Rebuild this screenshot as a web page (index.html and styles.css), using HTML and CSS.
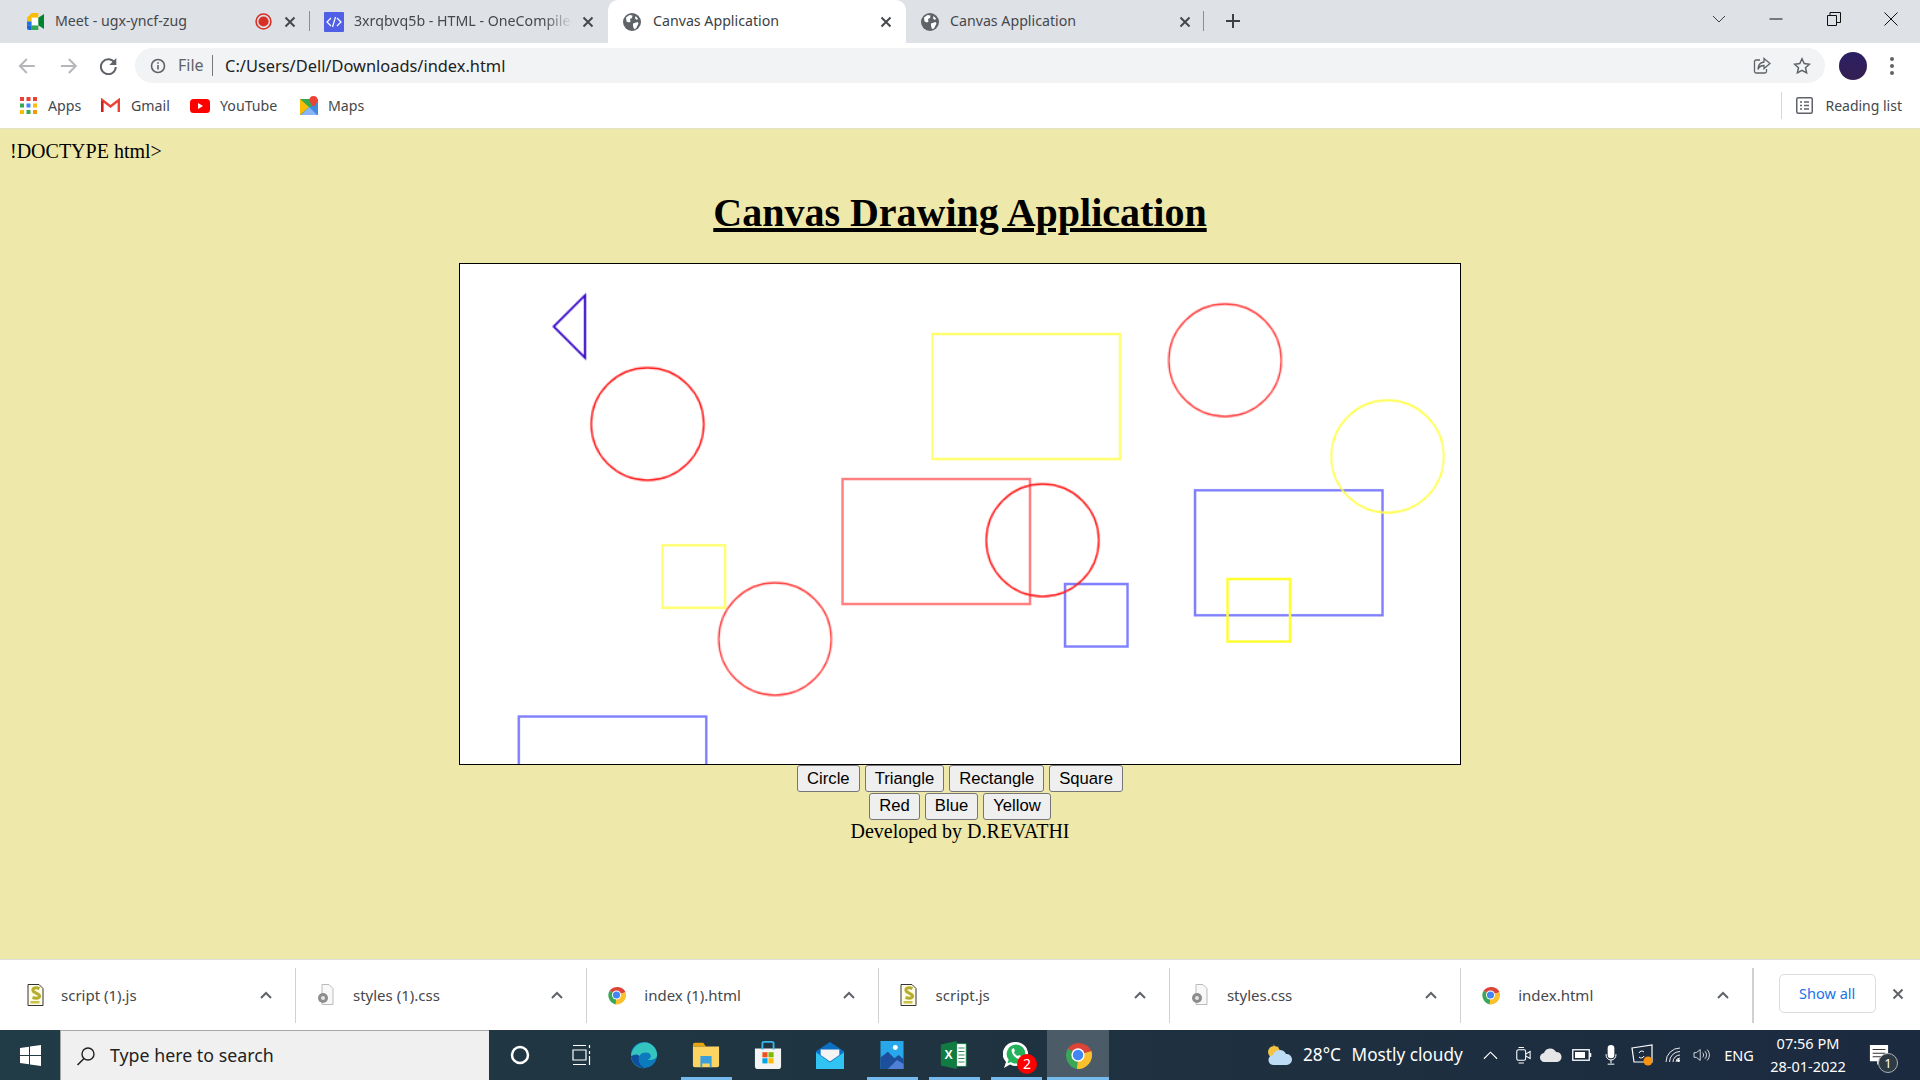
FILE: index.html
```html
<!DOCTYPE html>
<html lang="en">
<head>
<meta charset="utf-8">
<title>Canvas Application</title>
<link rel="stylesheet" href="styles.css">
</head>
<body>
<svg class="defs" width="0" height="0" aria-hidden="true">
  <symbol id="x" viewBox="0 0 12 12"><path d="M1.5 1.5l9 9M10.5 1.5l-9 9" fill="none" stroke="currentColor" stroke-width="2"/></symbol>
  <symbol id="globe" viewBox="0 0 18 18"><circle cx="9" cy="9" r="9" fill="#5f6368"/><path d="M3 4.500l3.500-2.500 3 .5-.5 2.500-2 1 .5 2.500-1.500 1L3.500 8.500zM10 10.500l4.500-1.500 1 1.500-2.500 5-2 .5-1-3zM12.500 3l2.500 2.500-1 1.500-2-1.500z" fill="#fff"/></symbol>
  <symbol id="caret" viewBox="0 0 12 8"><path d="M1 7l5-5 5 5" fill="none" stroke="currentColor" stroke-width="2"/></symbol>
  <symbol id="chrome" viewBox="0 0 24 24"><path d="M12 12L3.200 6.500A12 12 0 0 1 23.500 8.500z" fill="#db4437"/><path d="M12 12l11.500-3.500A12 12 0 0 1 11 24z" fill="#fbc02d"/><path d="M12 12l-1 12A12 12 0 0 1 3.200 6.500z" fill="#3aa757"/><circle cx="12" cy="12" r="5.700" fill="#fff"/><circle cx="12" cy="12" r="4.500" fill="#4285f4"/></symbol>
  <symbol id="jsfile" viewBox="0 0 18 22"><path d="M1.500.5h11l4 4v17h-15z" fill="#fffde8" stroke="#333"/><path d="M13 4.500c-5-2-8 .5-6 3l5 3c3 2 0 5-6 3" fill="none" stroke="#b5ad2c" stroke-width="3"/><path d="M4 17h9v2.500H4z" fill="#c9c24a"/></symbol>
  <symbol id="cssfile" viewBox="0 0 18 22"><path d="M5.500.5h7l4 4v16h-11z" fill="#f8f8f8" stroke="#bbb"/><circle cx="6.500" cy="14" r="5" fill="#8d8d8d"/><circle cx="6.500" cy="14" r="2" fill="#e4e4e4"/></symbol>
</svg>

<div class="screen">
  <header class="tabstrip">
    <div class="tab first">
      <svg class="ico19" viewBox="0 0 20 18"><path d="M1 5l5-5h7v5H6v4H1z" fill="#fbbc04"/><path d="M1 9h5v4H1z" fill="#1a73e8"/><path d="M1 13h5v5H3a2 2 0 0 1-2-2z" fill="#1967d2"/><path d="M6 13h7v5H6z" fill="#34a853"/><path d="M6 5h7v8H6z" fill="#fff"/><path d="M13 5v8l6 4V1z" fill="#00832d"/></svg>
      <span class="title">Meet - ugx-yncf-zug</span>
      <svg class="rec" viewBox="0 0 16 16"><circle cx="8" cy="8" r="7" fill="none" stroke="#d93025" stroke-width="1.500"/><circle cx="8" cy="8" r="4.800" fill="#d93025"/></svg>
      <svg class="close"><use href="#x"/></svg>
    </div>
    <div class="tab second">
      <svg class="ico20" viewBox="0 0 20 20"><rect width="20" height="20" rx="1" fill="#4f5fe6"/><path d="M7 6l-4 4 4 4M13 6l4 4-4 4M11.500 5l-3 10" fill="none" stroke="#fff" stroke-width="1.200"/></svg>
      <span class="title fade">3xrqbvq5b - HTML - OneCompiler</span>
      <svg class="close"><use href="#x"/></svg>
    </div>
    <div class="tab active">
      <svg class="ico18"><use href="#globe"/></svg>
      <span class="title">Canvas Application</span>
      <svg class="close"><use href="#x"/></svg>
    </div>
    <div class="tab last">
      <svg class="ico18"><use href="#globe"/></svg>
      <span class="title">Canvas Application</span>
      <svg class="close"><use href="#x"/></svg>
    </div>
    <svg class="newtab" viewBox="0 0 16 16"><path d="M8 1v14M1 8h14" stroke="#3c4043" stroke-width="2"/></svg>
    <div class="winctl">
      <svg class="ctl" viewBox="0 0 16 16"><path d="M2 5l6 6 6-6" fill="none" stroke="#3c4043"/></svg>
      <svg class="ctl" viewBox="0 0 16 16"><path d="M1.500 8h13" stroke="#111"/></svg>
      <svg class="ctl" viewBox="0 0 16 16"><path d="M1.500 4.500h9v10h-9zM4 4.500v-3h10.500v10h-4" fill="none" stroke="#111"/></svg>
      <svg class="ctl" viewBox="0 0 16 16"><path d="M1.500 1.500l13 13M14.500 1.500l-13 13" stroke="#111"/></svg>
    </div>
  </header>

  <nav class="toolbar">
    <svg class="navbtn" viewBox="0 0 41 18"><path d="M28 9H13M20 2l-7 7 7 7" fill="none" stroke="#b4b6b9" stroke-width="2"/></svg>
    <svg class="navbtn" viewBox="0 0 41 18"><path d="M13 9h15M21 2l7 7-7 7" fill="none" stroke="#b4b6b9" stroke-width="2"/></svg>
    <svg class="navbtn" viewBox="0 0 41 18"><path d="M27 6a7.500 7.500 0 1 0 1 4" fill="none" stroke="#5f6368" stroke-width="2"/><path d="M28.500 1v7h-7z" fill="#5f6368"/></svg>
    <div class="omnibox">
      <svg class="ico16" viewBox="0 0 16 16"><circle cx="8" cy="8" r="6.500" fill="none" stroke="#5f6368" stroke-width="1.600"/><path d="M8 7v4.500M8 4.300v1.500" stroke="#5f6368" stroke-width="1.600"/></svg>
      <span class="scheme">File</span>
      <span class="url">C:/Users/Dell/Downloads/index.html</span>
      <svg class="omni-ico" viewBox="0 0 18 18"><path d="M7 3H3a1.500 1.500 0 0 0-1.500 1.500v10A1.500 1.500 0 0 0 3 16h9a1.500 1.500 0 0 0 1.500-1.500V12" fill="none" stroke="#5f6368" stroke-width="1.300"/><path d="M11 1.500l6 5-6 5V8.500c-3 0-5 1-6 4 0-4 2-7 6-7.500z" fill="none" stroke="#5f6368" stroke-width="1.300"/></svg>
      <svg class="omni-ico" viewBox="0 0 18 18"><path d="M9 1.800l2.200 4.800 5.200.6-3.900 3.500 1.100 5.200L9 13.300l-4.600 2.600 1.100-5.200L1.600 7.200l5.200-.6z" fill="none" stroke="#5f6368" stroke-width="1.500"/></svg>
    </div>
    <div class="avatar"></div>
    <svg class="menu" viewBox="0 0 16 20"><circle cx="8" cy="3" r="2" fill="#5f6368"/><circle cx="8" cy="10" r="2" fill="#5f6368"/><circle cx="8" cy="17" r="2" fill="#5f6368"/></svg>
  </nav>

  <div class="bookmarks">
    <span class="bm bm-apps"><svg class="bm-i17" viewBox="0 0 17 17"><rect width="4" height="4" fill="#ea4335"/><rect x="6.500" width="4" height="4" fill="#ea4335"/><rect x="13" width="4" height="4" fill="#ea4335"/><rect y="6.500" width="4" height="4" fill="#34a853"/><rect x="6.500" y="6.500" width="4" height="4" fill="#4285f4"/><rect x="13" y="6.500" width="4" height="4" fill="#fbbc04"/><rect y="13" width="4" height="4" fill="#fbbc04"/><rect x="6.500" y="13" width="4" height="4" fill="#34a853"/><rect x="13" y="13" width="4" height="4" fill="#f29900"/></svg>Apps</span>
    <span class="bm bm-gmail"><svg class="bm-i19" viewBox="0 0 19 15"><path d="M1.200 14V2l8.300 6.500L17.800 2v12" fill="none" stroke="#ea4335" stroke-width="2.400"/><path d="M1.200 14V3" stroke="#c5221f" stroke-width="2.400"/></svg>Gmail</span>
    <span class="bm bm-yt"><svg class="bm-i20" viewBox="0 0 20 14"><rect width="20" height="14" rx="3.500" fill="#f00"/><path d="M8 4l5 3-5 3z" fill="#fff"/></svg>YouTube</span>
    <span class="bm"><svg class="bm-i18" viewBox="0 0 18 19"><path d="M0 3h18v16H0z" fill="#34a853"/><path d="M0 19L18 5v14z" fill="#4285f4" opacity=".85"/><path d="M0 3l9 8-9 8z" fill="#fbbc04"/><path d="M9 11l-8 8h16z" fill="#8ab4f8"/><path d="M13.500 0a4 4 0 0 1 4 4c0 3-4 7-4 7s-4-4-4-7a4 4 0 0 1 4-4z" fill="#ea4335"/></svg>Maps</span>
    <span class="reading"><svg class="bm-i17" viewBox="0 0 17 17"><rect x=".75" y=".75" width="15.500" height="15.500" rx="1.500" fill="none" stroke="#5f6368" stroke-width="1.500"/><path d="M4 5h2M4 8.500h2M4 12h2M8 5h5M8 8.500h5M8 12h5" stroke="#5f6368" stroke-width="1.500"/></svg>Reading list</span>
  </div>

  <main class="page">
    <div class="doctype">!DOCTYPE html&gt;</div>
    <h1 class="heading">Canvas Drawing Application</h1>
    <canvas id="board" class="board" width="800" height="400"></canvas>
    <div class="btnrow">
      <button class="tool">Circle</button>
      <button class="tool">Triangle</button>
      <button class="tool">Rectangle</button>
      <button class="tool">Square</button>
    </div>
    <div class="btnrow">
      <button class="tool">Red</button>
      <button class="tool">Blue</button>
      <button class="tool">Yellow</button>
    </div>
    <div class="credit">Developed by D.REVATHI</div>
  </main>

  <div class="downloads">
    <div class="dl dl-first"><svg class="dl-ico"><use href="#jsfile"/></svg><span class="dl-name">script (1).js</span><svg class="dl-caret"><use href="#caret"/></svg></div>
    <div class="dl"><svg class="dl-ico"><use href="#cssfile"/></svg><span class="dl-name">styles (1).css</span><svg class="dl-caret"><use href="#caret"/></svg></div>
    <div class="dl"><svg class="dl-ico"><use href="#chrome"/></svg><span class="dl-name">index (1).html</span><svg class="dl-caret"><use href="#caret"/></svg></div>
    <div class="dl"><svg class="dl-ico"><use href="#jsfile"/></svg><span class="dl-name">script.js</span><svg class="dl-caret"><use href="#caret"/></svg></div>
    <div class="dl"><svg class="dl-ico"><use href="#cssfile"/></svg><span class="dl-name">styles.css</span><svg class="dl-caret"><use href="#caret"/></svg></div>
    <div class="dl dl-last"><svg class="dl-ico"><use href="#chrome"/></svg><span class="dl-name">index.html</span><svg class="dl-caret"><use href="#caret"/></svg></div>
    <button class="showall">Show all</button>
    <svg class="dl-close"><use href="#x"/></svg>
  </div>

  <footer class="taskbar">
    <div class="start"><svg class="win" viewBox="0 0 21 21"><path d="M0 3l9-1.300V10H0zM10 1.500L21 0v10H10zM0 11h9v8.300L0 18zM10 11h11v10l-11-1.500z" fill="#fff"/></svg></div>
    <div class="search">
      <svg class="mag" viewBox="0 0 20 20"><circle cx="12" cy="8" r="6" fill="none" stroke="#222" stroke-width="1.400"/><path d="M8 12.500L1.500 19" stroke="#222" stroke-width="1.600"/></svg>
      <span class="search-text">Type here to search</span>
    </div>
    <div class="task"><svg class="t20" viewBox="0 0 20 20"><circle cx="10" cy="10" r="8" fill="none" stroke="#fff" stroke-width="2.500"/></svg></div>
    <div class="task"><svg class="t20 tview" viewBox="0 0 20 20"><path d="M2 .5h13M2 19.500h13M2 5h13v10H2zM18.500 0v3M18.500 6v3M18.500 11v9" fill="none" stroke="#fff" stroke-width="1.200"/></svg></div>
    <div class="task"><svg class="t30" viewBox="0 0 30 30"><circle cx="15" cy="15" r="14" fill="#0c7bbd"/><path d="M1 15C3 5 12 0 19 2c6 2 10 7 10 13 0 4-5 6-10 5 3-1 4-3 3-5-2-4-10-3-12 1-2 5 1 11 7 13C8 30 1 24 1 15z" fill="#35c5c0"/><path d="M10 16c-2 5 1 11 7 13-8 1-16-5-16-14 1 3 4-3 9 1z" fill="#0b4f9e"/></svg></div>
    <div class="task run"><svg class="t30" viewBox="0 0 30 28"><path d="M1 3a2 2 0 0 1 2-2h9l3 4H1z" fill="#e8a60c"/><path d="M1 5h28v20a2 2 0 0 1-2 2H3a2 2 0 0 1-2-2z" fill="#fcd462"/><path d="M9 15h12v12h-2v-4h-8v4H9z" fill="#3aa0dc"/></svg></div>
    <div class="task"><svg class="t30" viewBox="0 0 30 30"><path d="M1 8h28v19a3 3 0 0 1-3 3H4a3 3 0 0 1-3-3z" fill="#f4f4f4"/><path d="M9 9V3a2 2 0 0 1 2-2h8a2 2 0 0 1 2 2v6" fill="none" stroke="#38b5e8" stroke-width="2"/><rect x="9" y="12" width="5.500" height="5.500" fill="#f25022"/><rect x="15.500" y="12" width="5.500" height="5.500" fill="#7fba00"/><rect x="9" y="18.500" width="5.500" height="5.500" fill="#00a4ef"/><rect x="15.500" y="18.500" width="5.500" height="5.500" fill="#ffb900"/></svg></div>
    <div class="task"><svg class="t30" viewBox="0 0 30 30"><path d="M0 11L15 1l15 10v19H0z" fill="#0b6fc4"/><path d="M0 12l15 11 15-11v18H0z" fill="#31c4f3"/><path d="M5 9h20v6l-10 7-10-7z" fill="#f4f4f4"/></svg></div>
    <div class="task run"><svg class="t30" viewBox="0 0 30 34"><rect width="28" height="34" x="1" fill="#28a8ea"/><path d="M1 34V20l9-7 8 8 5-4 6 5v12z" fill="#1d4f9c"/><path d="M10 34l11-11 8 5v6z" fill="#4f7fd6"/><circle cx="19" cy="8" r="3" fill="#fff"/></svg></div>
    <div class="task run"><svg class="t30" viewBox="0 0 30 32"><path d="M0 4l18-4v32L0 28z" fill="#107c41"/><path d="M18 3h11v26H18z" fill="#fff" stroke="#107c41"/><path d="M20 8h7M20 12h7M20 16h7M20 20h7M20 24h7" stroke="#107c41"/><text class="xl" x="4" y="21">X</text></svg></div>
    <div class="task run"><span class="wa"><svg class="t26" viewBox="0 0 26 28"><path d="M13 1a12 12 0 0 1 0 24c-2 0-4-.5-6-1.500L1 27l2-6a12 12 0 0 1 10-20z" fill="#fff"/><path d="M13 3.500a9.500 9.500 0 0 1 0 19c-2 0-3.500-.5-5-1.500l-3.500 1.300 1.200-3.500A9.500 9.500 0 0 1 13 3.500z" fill="#25b05a"/><path d="M9 8c-1 2 0 5 2.500 7.500s5 3 7 2l.5-2-3-1.500-1 1c-2-.5-3.500-2-4-4l1-1-1.200-3z" fill="#fff"/></svg><span class="wa-badge">2</span></span></div>
    <div class="task run on"><svg class="t28"><use href="#chrome"/></svg></div>
    <div class="weather"><svg class="sun" viewBox="0 0 28 24"><path d="M8 1l1.500 3.500 3.700-1 .3 3.800z" fill="#f5c242"/><circle cx="9" cy="9" r="6" fill="#f5c242"/><path d="M9 22a5 5 0 0 1-1-10 7 7 0 0 1 13-1 5.500 5.500 0 0 1 1 11z" fill="#bcdcf5"/></svg><span class="temp">28°C</span><span class="cond">Mostly cloudy</span></div>
    <div class="slot s36"><svg class="tr14" viewBox="0 0 16 10"><path d="M1 9l7-7 7 7" fill="none" stroke="#fff" stroke-width="1.200"/></svg></div>
    <div class="slot s28"><svg class="tr18" viewBox="0 0 18 22"><rect x="2" y="5" width="10" height="12" rx="2" fill="none" stroke="#fff" stroke-width="1.200"/><path d="M12 10l5-3v8l-5-3M4 2.500h6M4 20h6" fill="none" stroke="#fff" stroke-width="1.200"/></svg></div>
    <div class="slot s28"><svg class="tr22" viewBox="0 0 22 14"><path d="M5 14a4.500 4.500 0 0 1-1-9 6.500 6.500 0 0 1 12-1 5 5 0 0 1 1 10z" fill="#e6e6e6"/></svg></div>
    <div class="slot s34"><svg class="tr20" viewBox="0 0 20 12"><rect x=".75" y=".75" width="16.500" height="10.500" fill="none" stroke="#fff" stroke-width="1.300"/><rect x="3" y="3" width="10" height="6" fill="#fff"/><path d="M18.500 4v4" stroke="#fff" stroke-width="1.500"/></svg></div>
    <div class="slot s24"><svg class="tr16" viewBox="0 0 14 24"><rect x="3" y="0" width="8" height="16" rx="4" fill="#fff"/><path d="M1 11c0 4 2 7 6 7s6-3 6-7M7 18v4M3 23h8" fill="none" stroke="#fff" stroke-width="1.200"/></svg></div>
    <div class="slot s38"><svg class="tr22b" viewBox="0 0 22 22"><path d="M1 4l20-3v17H3z" fill="none" stroke="#fff" stroke-width="1.200"/><path d="M8 9a3 3 0 0 1 5-1M13 12a3 3 0 0 1-5 1" fill="none" stroke="#fff"/><circle cx="17" cy="17" r="4.500" fill="#f7930e"/></svg></div>
    <div class="slot s24"><svg class="tr16" viewBox="0 0 16 16"><path d="M1 15A14 14 0 0 1 15 1M4.500 15A10.500 10.500 0 0 1 15 4.500M8 15a7 7 0 0 1 7-7M11 15a4 4 0 0 1 4-4" fill="none" stroke="#fff" stroke-width=".9"/><circle cx="13.500" cy="13.500" r="1.500" fill="#fff"/></svg></div>
    <div class="slot s32"><svg class="tr20" viewBox="0 0 20 18"><path d="M1 6h3l5-4v14l-5-4H1z" fill="none" stroke="#fff"/><path d="M12 6a4 4 0 0 1 0 6M15 4a7 7 0 0 1 0 10M18 2a10 10 0 0 1 0 14" fill="none" stroke="#fff"/></svg></div>
    <div class="slot s44 tray-text">ENG</div>
    <div class="clock"><span>07:56 PM</span><span>28-01-2022</span></div>
    <div class="slot s48"><span class="notif"><svg class="t20" viewBox="0 0 20 22"><path d="M0 0h20v18h-8l-4 4v-4H0z" fill="#fff"/><path d="M3 5h14M3 9h14M3 13h9" stroke="#333" stroke-width="1.200"/></svg><span class="notif-badge">1</span></span></div>
  </footer>
</div>
<script src="script.js"></script>
</body>
</html>
```
FILE: styles.css
```css
* { box-sizing: border-box; }
html, body { margin: 0; padding: 0; height: 100%; overflow: hidden; }
body { font-family: "Noto Sans", "Open Sans", sans-serif; }
.defs { position: absolute; }
svg { display: block; flex: none; }

.screen { width: 1920px; height: 1080px; display: flex; flex-direction: column; }

/* tabs */
.tabstrip { height: 43px; flex: none; background: #dee1e6; display: flex; align-items: stretch; padding-left: 12px; }
.tab { width: 298px; display: flex; align-items: center; padding-left: 14px; padding-right: 14px; font-size: 14.200px; color: #45484c; position: relative; }
.tab.first::after, .tab.last::after { content: ""; position: absolute; right: 0; top: 11px; height: 20px; width: 1px; background: #8a8d91; }
.tab .title { flex: 1; min-width: 0; white-space: nowrap; overflow: hidden; padding-left: 10px; padding-bottom: 2px; }
.tab .fade { -webkit-mask-image: linear-gradient(90deg, #000 84%, transparent 96%); mask-image: linear-gradient(90deg, #000 84%, transparent 96%); }
.tab.active { background: #fff; border-radius: 10px 10px 0 0; padding-left: 15px; color: #3c4043; }
.tab.active .title { padding-left: 12px; }
.tab.last { padding-left: 15px; padding-right: 13px; }
.tab.last .title { padding-left: 11px; }
.ico19 { width: 19px; height: 17px; }
.ico20 { width: 20px; height: 20px; }
.ico18 { width: 18px; height: 18px; }
.ico16 { width: 16px; height: 16px; }
.rec { width: 17px; height: 17px; margin-right: 12px; }
.close { width: 12px; height: 12px; color: #45494d; }
.newtab { width: 16px; height: 16px; margin: 13px 0 0 21px; }
.winctl { margin-left: auto; display: flex; padding-right: 21px; padding-top: 11px; gap: 41.500px; }
.ctl { width: 16px; height: 16px; }

/* toolbar */
.toolbar { height: 45px; flex: none; background: #fff; display: flex; align-items: center; padding-left: 7px; }
.navbtn { width: 40.700px; height: 18px; }
.omnibox { flex: 1; margin-left: 6px; height: 35px; background: #f1f3f4; border-radius: 18px; display: flex; align-items: center; padding: 0 14px 0 15px; font-size: 16.400px; color: #202124; }
.scheme { margin-left: 12px; width: 35px; color: #5f6368; border-right: 1px solid #777; line-height: 21px; height: 21px; font-size: 16px; }
.url { margin-left: 12px; flex: 1; white-space: nowrap; padding-bottom: 1px; }
.omni-ico { width: 18px; height: 18px; margin-left: 22px; }
.avatar { width: 28px; height: 28px; border-radius: 50%; margin-left: 14px; background: linear-gradient(#2b1f63, #341f52); }
.menu { width: 16px; height: 20px; margin: 0 20px 0 17px; }

/* bookmarks */
.bookmarks { height: 41px; flex: none; background: #fff; border-bottom: 1px solid #e4e2c8; display: flex; align-items: center; padding-left: 20px; padding-bottom: 5px; font-size: 14.200px; color: #45484c; }
.bm { display: flex; align-items: center; gap: 10px; white-space: nowrap; }
.bm-apps { width: 81px; gap: 11px; }
.bm-gmail { width: 89px; gap: 11px; }
.bm-yt { width: 110px; }
.bm-i17 { width: 17px; height: 17px; }
.bm-i19 { width: 19px; height: 15px; }
.bm-i20 { width: 20px; height: 14px; }
.bm-i18 { width: 18px; height: 19px; }
.reading { margin-left: auto; height: 27px; border-left: 1px solid #d5d7da; padding: 0 18px 0 14px; display: flex; align-items: center; gap: 12px; font-size: 14px; }

/* page */
.page { flex: 1; min-height: 0; overflow: hidden; background: #eee8aa; padding: 11px 10px 0; font-family: "Liberation Serif", serif; font-size: 20px; color: #000; text-align: center; }
.doctype { text-align: left; line-height: 23px; }
.heading { font-size: 40px; line-height: 46px; font-weight: 700; text-decoration: underline; margin: 27px 0 27px; }
.board { display: block; width: 1002px; height: 502px; margin: 0 auto; border: 1px solid #000; background: #fff; }
.btnrow { height: 27.500px; line-height: 27px; }
.tool { font-family: "Liberation Sans", sans-serif; font-size: 16.670px; height: 27px; padding: 0 9px; margin: 0; background: #efefef; border: 1px solid #767676; border-radius: 3px; color: #000; vertical-align: top; }
.credit { line-height: 23px; }

/* downloads */
.downloads { height: 71px; flex: none; background: #fff; border-top: 1px solid #dfdfdf; display: flex; align-items: center; font-size: 15px; color: #45484c; }
.dl { width: 291.300px; height: 55px; display: flex; align-items: center; padding-left: 20px; padding-right: 23px; border-right: 1px solid #cfd1d4; }
.dl-first { width: 296px; padding-left: 26px; }
.dl-last { width: 292.500px; border-right-width: 2px; }
.dl-ico { width: 19px; height: 22px; margin-right: 18px; }
.dl-first .dl-ico { margin-right: 16px; }
.dl-name { flex: 1; white-space: nowrap; }
.dl-caret { width: 12px; height: 8px; color: #5f6368; }
.showall { margin-left: 25px; width: 97px; height: 39px; margin-top: -3px; background: #fff; border: 1px solid #dadce0; border-radius: 5px; color: #1a73e8; font: 14.500px "Noto Sans", sans-serif; padding: 0 0 2px; }
.dl-close { width: 12px; height: 12px; margin-left: 16px; color: #5f6368; margin-top: -3px; }

/* taskbar */
.taskbar { height: 50px; flex: none; display: flex; align-items: stretch; background: linear-gradient(90deg, #213b47, #1f3340 50%, #1c2a40); color: #fff; }
.start { width: 60px; display: flex; align-items: center; justify-content: center; }
.win { width: 21px; height: 21px; }
.search { width: 429px; background: #f0f0f0; border-top: 1px solid #a8a8a8; border-left: 1px solid #a8a8a8; display: flex; align-items: center; padding-left: 15px; gap: 14px; color: #222; font-size: 17.800px; }
.search-text { padding-bottom: 2px; }
.mag { width: 20px; height: 20px; }
.task { width: 62px; display: flex; align-items: center; justify-content: center; }
.task.run { background: linear-gradient(#76b9ed, #76b9ed) center bottom / 51px 3px no-repeat; }
.task.on { background: linear-gradient(#76b9ed, #76b9ed) center bottom / 100% 3px no-repeat, #4b5b68; }
.t20 { width: 20px; height: 20px; }
.tview { margin-right: 3px; }
.t26 { width: 26px; height: 28px; }
.t28 { width: 28px; height: 28px; }
.t30 { width: 28px; height: 28px; }
.xl { font: 700 14px "Liberation Sans", sans-serif; fill: #fff; }
.wa { position: relative; display: block; }
.wa-badge { position: absolute; right: -8px; bottom: -5px; width: 20px; height: 20px; border-radius: 50%; background: #f00; color: #fff; font-size: 14px; line-height: 20px; text-align: center; }
.weather { margin-left: 156px; display: flex; align-items: center; font-size: 17.200px; white-space: nowrap; }
.sun { width: 28px; height: 24px; margin-right: 10px; }
.temp { width: 48.600px; padding-bottom: 1px; }
.cond { width: 121.400px; padding-bottom: 1px; }
.slot { display: flex; align-items: center; justify-content: center; }
.s24 { width: 24px; } .s28 { width: 28px; } .s32 { width: 32px; } .s34 { width: 34px; } .s36 { width: 36px; } .s38 { width: 38px; } .s44 { width: 44px; } .s48 { width: 48px; }
.tr14 { width: 15px; height: 10px; }
.tr16 { width: 16px; height: 20px; }
.tr18 { width: 16px; height: 20px; }
.tr20 { width: 20px; height: 14px; }
.tr22 { width: 22px; height: 14px; }
.tr22b { width: 22px; height: 22px; }
.tray-text { font-size: 14.500px; }
.clock { width: 94px; display: flex; flex-direction: column; align-items: center; justify-content: center; font-size: 14.500px; line-height: 23px; }
.notif { position: relative; display: block; }
.notif-badge { position: absolute; left: 9px; top: 8px; width: 20px; height: 20px; border-radius: 50%; background: #2d3a44; border: 1px solid #b0b0b0; font-size: 13px; line-height: 18px; text-align: center; }
```
FILE: script.js
```js
var ctx = document.getElementById('board').getContext('2d');

function rect(x, y, w, h, colour) {
  ctx.strokeStyle = colour;
  ctx.lineWidth = 2;
  ctx.strokeRect(x, y, w, h);
}
function circle(x, y, colour, width) {
  ctx.strokeStyle = colour;
  ctx.lineWidth = width;
  ctx.beginPath();
  ctx.arc(x, y, 45, 0, Math.PI * 2);
  ctx.stroke();
}

rect(378, 56, 150, 100, '#ffff70');
rect(306, 172, 150, 100, '#ff8080');
rect(588, 181, 150, 100, '#8080ff');
rect(47, 362, 150, 100, '#8080ff');
rect(484, 256, 50, 50, '#8080ff');
rect(162, 225, 50, 50, '#ffff70');
rect(614, 252, 50, 50, '#ffff30');
circle(150, 128, '#ff1a1a', 1.4);
circle(466, 221, '#ff1a1a', 1.4);
circle(612, 77, '#ff4040', 1.3);
circle(252, 300, '#ff4040', 1.3);
circle(742, 154, '#ffff40', 1.3);

ctx.strokeStyle = '#3300c8';
ctx.lineWidth = 1.7;
ctx.beginPath();
ctx.moveTo(100, 25);
ctx.lineTo(75, 50);
ctx.lineTo(100, 75);
ctx.closePath();
ctx.stroke();
```
